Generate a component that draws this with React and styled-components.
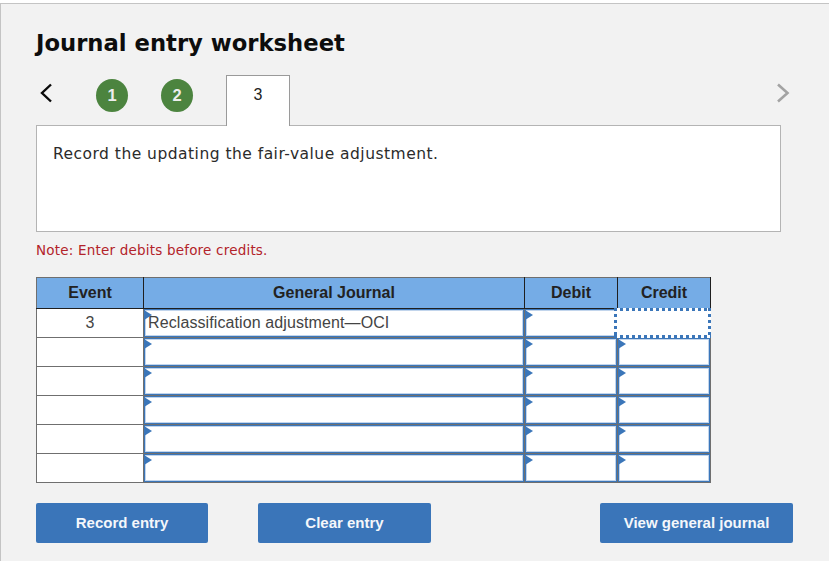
import React from "react";
import styled, { createGlobalStyle } from "styled-components";

const Global = createGlobalStyle`
  html, body { margin: 0; padding: 0; background: #fff; }
  #root { width: 829px; height: 561px; overflow: hidden; }
`;

const Page = styled.div`
  box-sizing: border-box;
  width: 829px;
  height: 558px;
  margin-top: 3px;
  background: #f2f2f2;
  border-top: 1px solid #c4c4c4;
  border-left: 1px solid #c4c4c4;
  padding: 24px 36px 0 35px;
  display: flex;
  flex-direction: column;
  font-family: "DejaVu Sans", Verdana, sans-serif;
`;

const Title = styled.h1`
  margin: 0;
  font-size: 22.7px;
  line-height: 30px;
  font-weight: 700;
  color: #0d0d0d;
`;

const TabBar = styled.div`
  display: flex;
  align-items: flex-start;
  height: 50px;
  margin-top: 17px;
  position: relative;
  z-index: 1;
`;

const Arrow = styled.button`
  border: 0;
  background: none;
  padding: 0;
  width: 20px;
  height: 24px;
  margin-top: 6px;
  display: block;
`;

const Step = styled.div`
  width: 32px;
  height: 33px;
  border-radius: 50%;
  background: #4c843f;
  color: #eeeeee;
  font: 700 16.5px/33px "Liberation Sans", Arial, sans-serif;
  text-align: center;
  margin-top: 4px;
  margin-left: ${(p) => p.$gap}px;
`;

const ActiveTab = styled.div`
  box-sizing: border-box;
  width: 64px;
  height: 51px;
  margin-left: 33px;
  border: 1px solid #9a9a9a;
  border-bottom: 0;
  background: #fff;
  color: #222;
  font: 400 16px/38px "Liberation Sans", Arial, sans-serif;
  text-align: center;
`;

const NextArrow = styled(Arrow)`
  margin-left: auto;
  margin-right: -1px;
`;

const Prompt = styled.div`
  box-sizing: border-box;
  width: 745px;
  height: 107px;
  background: #fff;
  border: 1px solid #b4b4b4;
  padding: 18px 16px;
  font-size: 15.5px;
  line-height: 20px;
  color: #2b2b2b;
  letter-spacing: 0.48px;
`;

const Note = styled.p`
  margin: 10px 0 0;
  font-size: 13.5px;
  line-height: 17px;
  color: #b3232a;
  letter-spacing: 0.2px;
`;

const Table = styled.table`
  box-sizing: border-box;
  width: 674px;
  margin-top: 18px;
  border-collapse: collapse;
  table-layout: fixed;
  font-family: "Liberation Sans", Arial, sans-serif;
`;

const Head = styled.th`
  height: 30px;
  padding: 0;
  background: #75ace6;
  border: 1px solid #1f1f1f;
  border-top-color: #6f6f6f;
  border-bottom-color: #1f1f1f;
  border-left-color: ${(p) => (p.$first ? "#6f6f6f" : "#1f1f1f")};
  font-size: 16px;
  font-weight: 700;
  color: #222;
`;

const EventCell = styled.td`
  height: 28px;
  padding: 0;
  background: #fff;
  border: 1px solid #6f6f6f;
  font-size: 16px;
  color: #444;
  text-align: center;
`;

const EntryCell = styled.td`
  height: 28px;
  padding: 0;
  background: #fff;
  border: 1px solid #6f6f6f;
  position: relative;
`;

const Field = styled.div`
  box-sizing: border-box;
  height: 28px;
  background: #fff;
  border: 1px solid #3b76b9;
  box-shadow: inset 0 0 0 1px #c2d5ec;
  font-size: 16px;
  letter-spacing: 0.1px;
  line-height: 26px;
  color: #444;
  padding-left: 3px;
  white-space: nowrap;
  overflow: hidden;
`;

const FocusField = styled.div`
  position: absolute;
  top: -1px;
  bottom: -1px;
  left: -4px;
  right: -1px;
  background-color: #fff;
  background-image:
    linear-gradient(90deg, #3b76b9 50%, transparent 50%),
    linear-gradient(90deg, #3b76b9 50%, transparent 50%),
    linear-gradient(180deg, #3b76b9 50%, transparent 50%),
    linear-gradient(180deg, #3b76b9 50%, transparent 50%);
  background-size: 6px 3px, 6px 3px, 3px 6px, 3px 6px;
  background-position: 0 0, 0 100%, 0 0, 100% 0;
  background-repeat: repeat-x, repeat-x, repeat-y, repeat-y;
`;

const Flag = styled.span`
  position: absolute;
  left: 0;
  top: 1px;
  width: 0;
  height: 0;
  border-left: 8px solid #3b76b9;
  border-top: 5px solid transparent;
  border-bottom: 5px solid transparent;
`;

const Actions = styled.div`
  display: flex;
  margin-top: 20px;
  width: 757px;
`;

const Action = styled.button`
  box-sizing: border-box;
  height: 40px;
  width: ${(p) => p.$w}px;
  margin-left: ${(p) => p.$ml || 0}px;
  border: 0;
  border-radius: 2px;
  background: #3a75b9;
  color: #f4f7fb;
  font: 700 15px "Liberation Sans", Arial, sans-serif;
  padding: 0 0 1px;
`;

const rows = [
  { event: "3", text: "Reclassification adjustment—OCI" },
  {}, {}, {}, {}, {},
];

export default function App() {
  return (
    <Page>
      <Global />
      <Title>Journal entry worksheet</Title>
      <TabBar>
        <Arrow aria-label="Previous">
          <svg width="20" height="24" viewBox="0 0 20 24" fill="none">
            <path d="M15 3.5 L6 12 L15 20.5" stroke="#0a0a0a" strokeWidth="2.4" />
          </svg>
        </Arrow>
        <Step $gap={40}>1</Step>
        <Step $gap={33}>2</Step>
        <ActiveTab>3</ActiveTab>
        <NextArrow aria-label="Next">
          <svg width="20" height="24" viewBox="0 0 20 24" fill="none">
            <path d="M4 3.5 L13.5 12 L4 20.5" stroke="#a3a3a3" strokeWidth="2.6" />
          </svg>
        </NextArrow>
      </TabBar>
      <Prompt>Record the updating the fair-value adjustment.</Prompt>
      <Note>Note: Enter debits before credits.</Note>
      <Table>
        <colgroup>
          <col style={{ width: 107 }} />
          <col style={{ width: 381 }} />
          <col style={{ width: 93 }} />
          <col style={{ width: 93 }} />
        </colgroup>
        <thead>
          <tr>
            <Head $first>Event</Head>
            <Head>General Journal</Head>
            <Head>Debit</Head>
            <Head>Credit</Head>
          </tr>
        </thead>
        <tbody>
          {rows.map((r, i) => (
            <tr key={i}>
              <EventCell>{r.event}</EventCell>
              <EntryCell><Flag /><Field>{r.text}</Field></EntryCell>
              <EntryCell><Flag /><Field /></EntryCell>
              <EntryCell>
                {i === 0 ? <FocusField /> : <><Flag /><Field /></>}
              </EntryCell>
            </tr>
          ))}
        </tbody>
      </Table>
      <Actions>
        <Action $w={172}>Record entry</Action>
        <Action $w={173} $ml={50}>Clear entry</Action>
        <Action $w={193} $ml={169}>View general journal</Action>
      </Actions>
    </Page>
  );
}
